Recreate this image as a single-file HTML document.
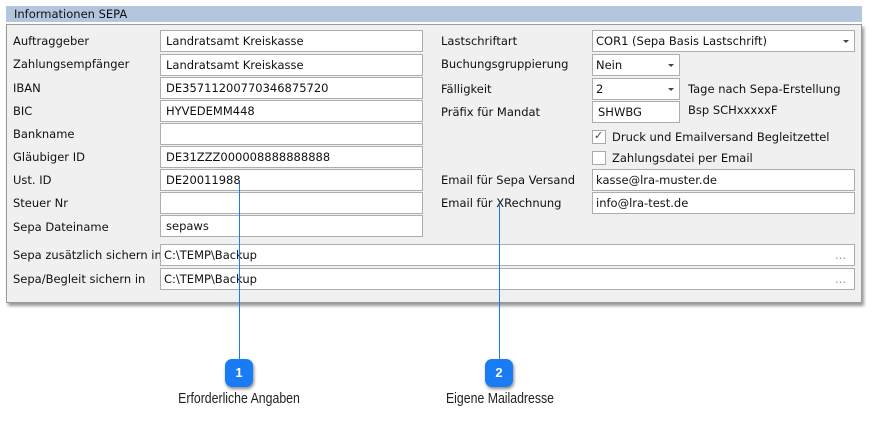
<!DOCTYPE html>
<html><head><meta charset="utf-8"><style>
body{margin:0;width:873px;height:423px;background:#fff;position:relative;font-family:"DejaVu Sans",Verdana,sans-serif;font-size:11.5px;color:#111;overflow:hidden}
.a{position:absolute}
.hdr{left:6px;top:6px;width:856px;height:16px;background:#b3c6dd;}
.hdr span{position:absolute;left:8px;top:1px}
.panel{left:6px;top:24px;width:854px;height:277px;background:#f0f0f0;border:1px solid #9a9a9a;box-shadow:2px 3px 3px #999}
.l{position:absolute;white-space:nowrap}
.i{position:absolute;background:#fff;border:1px solid #adadad;box-sizing:border-box;height:22px;padding-left:5px;line-height:20px;white-space:nowrap}
.dd::after{content:"";position:absolute;right:5px;top:9px;border-left:3px solid transparent;border-right:3px solid transparent;border-top:3px solid #444}
.cb{position:absolute;width:12px;height:12px;border:1px solid #aaa;background:#fff}
.line{position:absolute;width:1px;background:#1a7cf5}
.badge{position:absolute;width:28px;height:28px;border-radius:7px;background:#1a7cf5;color:#fff;font:bold 13px "Liberation Sans",sans-serif;text-align:center;line-height:28px;box-shadow:1px 2px 3px #888}
.cap{position:absolute;font:15px "Liberation Sans",sans-serif;transform:scaleX(.82);transform-origin:center;white-space:nowrap;color:#222}
</style></head><body>
<div class="a hdr"><span>Informationen SEPA</span></div>
<div class="a panel"></div>
<div class="l" style="left:13px;top:34px">Auftraggeber</div>
<div class="l" style="left:13px;top:57px">Zahlungsempfänger</div>
<div class="l" style="left:13px;top:81px">IBAN</div>
<div class="l" style="left:13px;top:104px">BIC</div>
<div class="l" style="left:13px;top:127px">Bankname</div>
<div class="l" style="left:13px;top:150px">Gläubiger ID</div>
<div class="l" style="left:13px;top:173px">Ust. ID</div>
<div class="l" style="left:13px;top:196px">Steuer Nr</div>
<div class="l" style="left:13px;top:220px">Sepa Dateiname</div>
<div class="i" style="left:160px;top:30px;width:263px">Landratsamt Kreiskasse</div>
<div class="i" style="left:160px;top:54px;width:263px">Landratsamt Kreiskasse</div>
<div class="i" style="left:160px;top:77px;width:263px">DE35711200770346875720</div>
<div class="i" style="left:160px;top:100px;width:263px">HYVEDEMM448</div>
<div class="i" style="left:160px;top:123px;width:263px"></div>
<div class="i" style="left:160px;top:146px;width:263px">DE31ZZZ000008888888888</div>
<div class="i" style="left:160px;top:169px;width:263px">DE20011988</div>
<div class="i" style="left:160px;top:192px;width:263px"></div>
<div class="i" style="left:160px;top:215px;width:263px">sepaws</div>
<div class="l" style="left:13px;top:248px">Sepa zusätzlich sichern in</div>
<div class="l" style="left:13px;top:272px">Sepa/Begleit sichern in</div>
<div class="i" style="left:160px;top:244px;width:695px;padding-left:3px">C:\TEMP\Backup<span style="position:absolute;right:8px;color:#89a">...</span></div>
<div class="i" style="left:160px;top:268px;width:695px;padding-left:3px">C:\TEMP\Backup<span style="position:absolute;right:8px;color:#89a">...</span></div>
<div class="l" style="left:441px;top:34px">Lastschriftart</div>
<div class="l" style="left:441px;top:57px">Buchungsgruppierung</div>
<div class="l" style="left:441px;top:82px">Fälligkeit</div>
<div class="l" style="left:441px;top:105px">Präfix für Mandat</div>
<div class="l" style="left:441px;top:173px">Email für Sepa Versand</div>
<div class="l" style="left:441px;top:196px">Email für XRechnung</div>
<div class="i dd" style="left:592px;top:30px;width:263px;padding-left:3px">COR1 (Sepa Basis Lastschrift)</div>
<div class="i dd" style="left:592px;top:54px;width:88px;padding-left:3px">Nein</div>
<div class="i dd" style="left:592px;top:78px;width:88px;padding-left:3px">2</div>
<div class="i" style="left:592px;top:101px;width:88px">SHWBG</div>
<div class="l" style="left:688px;top:82px">Tage nach Sepa-Erstellung</div>
<div class="l" style="left:688px;top:103px">Bsp SCHxxxxxF</div>
<div class="cb" style="left:592px;top:130px"><span style="position:absolute;left:1px;top:-2px;font-size:11px;color:#444">✓</span></div>
<div class="l" style="left:612px;top:130px">Druck und Emailversand Begleitzettel</div>
<div class="cb" style="left:592px;top:151px"></div>
<div class="l" style="left:612px;top:151px">Zahlungsdatei per Email</div>
<div class="i" style="left:592px;top:169px;width:263px;padding-left:3px">kasse@lra-muster.de</div>
<div class="i" style="left:592px;top:192px;width:263px;padding-left:3px">info@lra-test.de</div>
<div class="line" style="left:239px;top:182px;height:178px"></div>
<div class="line" style="left:499px;top:205px;height:155px"></div>
<div class="badge" style="left:225px;top:359px">1</div>
<div class="badge" style="left:485px;top:359px">2</div>
<div class="cap" style="left:139px;top:390px;width:200px;text-align:center">Erforderliche Angaben</div>
<div class="cap" style="left:400px;top:390px;width:200px;text-align:center">Eigene Mailadresse</div>
</body></html>
